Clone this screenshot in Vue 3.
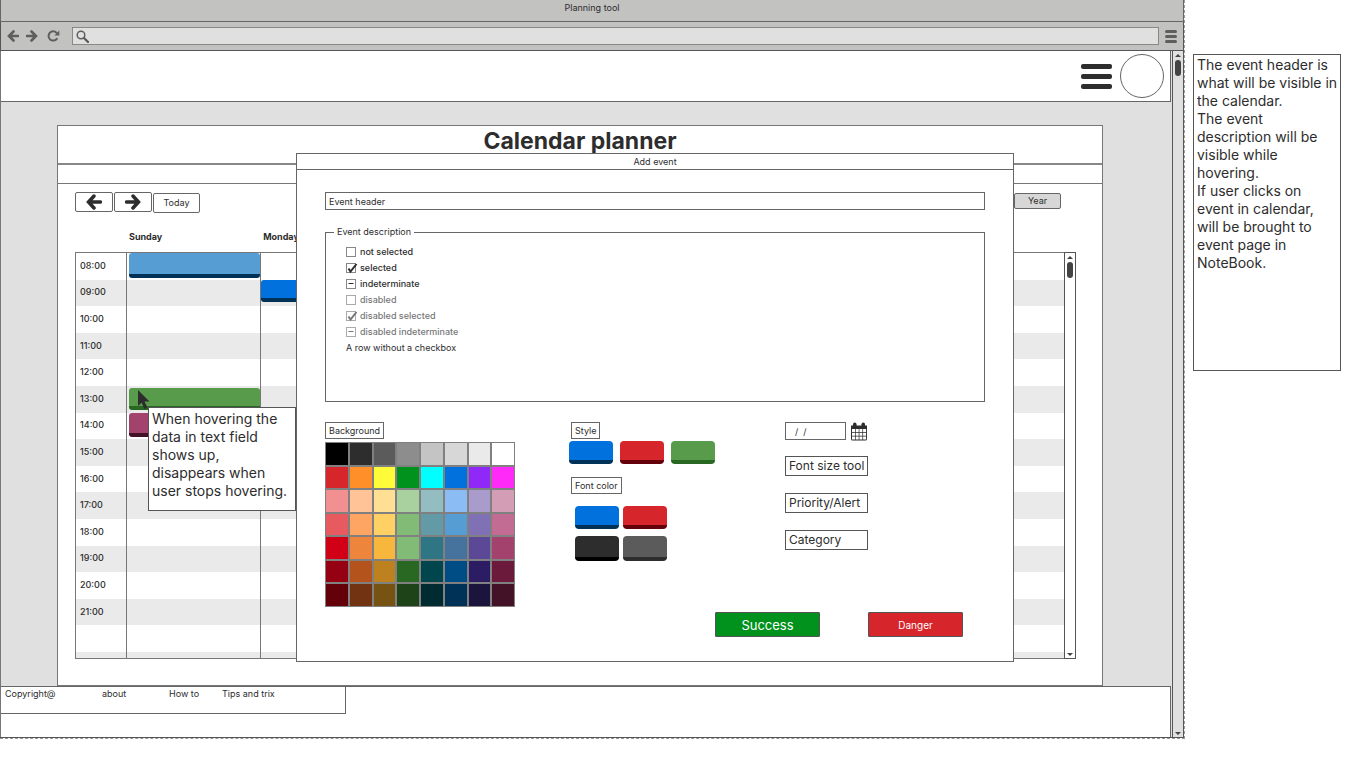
<script setup>
import { ref } from 'vue'

const times = ['08:00', '09:00', '10:00', '11:00', '12:00', '13:00', '14:00', '15:00', '16:00', '17:00', '18:00', '19:00', '20:00', '21:00', '', '']
const days = ['Sunday', 'Monday', '', '', '', '', '']
const events = {
  '0-0': 'sky',
  '1-1': 'blue',
  '5-0': 'green',
  '6-0': 'plum'
}
const rows = [
  { label: 'not selected' },
  { label: 'selected', checked: true },
  { label: 'indeterminate', mixed: true },
  { label: 'disabled', disabled: true },
  { label: 'disabled selected', checked: true, disabled: true },
  { label: 'disabled indeterminate', mixed: true, disabled: true }
]
const palette = [
  '#000000', '#2d2d2d', '#5b5b5b', '#8d8d8d', '#c4c4c4', '#d7d7d7', '#eaeaea', '#ffffff',
  '#d6252b', '#ff8f29', '#fffb38', '#00921c', '#00ffff', '#0071dd', '#9029f8', '#ff29f8',
  '#f28f90', '#ffc397', '#ffdf93', '#a9d09f', '#93bdc1', '#8bbdf4', '#a99ccd', '#d39db5',
  '#e75b60', '#ffa564', '#ffd063', '#82bb75', '#629ba5', '#569dd3', '#8070b5', '#c26c93',
  '#d20017', '#ee853c', '#f7b73c', '#82bb75', '#2e7683', '#46729e', '#5b4997', '#a3426c',
  '#960013', '#b4531b', '#bd821f', '#286823', '#00464c', '#004c85', '#2c1c64', '#6c1a3b',
  '#640009', '#713312', '#765312', '#1f4318', '#002b30', '#003156', '#1b153d', '#441227'
]
const header = ref('Event header')
const date = ref('/  /')
const address = ref('')
</script>

<template>
  <div class="page">
    <div class="frame">
      <div class="titlebar">Planning tool</div>
      <div class="navbar">
        <button class="nav" aria-label="Back">
          <svg width="12" height="12" viewBox="0 0 12 12"><path d="M6.5 1.5 2 6l4.500 4.500M2.500 6H11" /></svg>
        </button>
        <button class="nav" aria-label="Forward">
          <svg width="12" height="12" viewBox="0 0 12 12"><path d="M5.500 1.500 10 6l-4.500 4.500M9.500 6H1" /></svg>
        </button>
        <button class="nav reload" aria-label="Reload">
          <svg width="13" height="12" viewBox="0 0 13 12"><path class="thin" d="M9.800 8.800A4.600 4.600 0 1 1 9.500 2.800" /><path class="solid" d="M12.300.6v4.900H7.400z" /></svg>
        </button>
        <label class="address">
          <svg width="13" height="13" viewBox="0 0 13 13"><circle cx="5" cy="5" r="3.800" /><path d="m8 8 4 4" /></svg>
          <input v-model="address" type="text" aria-label="Address" />
        </label>
        <button class="nav menu" aria-label="Browser menu"><i></i><i></i><i></i></button>
      </div>

      <div class="viewport">
        <div class="content">
          <header class="site">
            <button class="burger" aria-label="Menu"><i></i><i></i><i></i></button>
            <div class="avatar"></div>
          </header>

          <main class="card">
            <h1>Calendar planner</h1>
            <div class="strip"></div>

            <div class="tools">
              <button class="step" aria-label="Previous">
                <svg width="16" height="16" viewBox="0 0 16 16"><path d="M8 2 2.500 8 8 14M3 8h11.500" /></svg>
              </button>
              <button class="step" aria-label="Next">
                <svg width="16" height="16" viewBox="0 0 16 16"><path d="M8 2l5.500 6L8 14M13 8H1.500" /></svg>
              </button>
              <button class="today">Today</button>
              <button class="year">Year</button>
            </div>

            <div class="calendar">
              <table>
                <thead>
                  <tr>
                    <td></td>
                    <th v-for="(d, i) in days" :key="i" scope="col">{{ d }}</th>
                  </tr>
                </thead>
                <tbody>
                  <tr v-for="(t, r) in times" :key="r">
                    <th scope="row">{{ t }}</th>
                    <td v-for="(d, c) in days" :key="c">
                      <button v-if="events[r + '-' + c]" class="event" :class="events[r + '-' + c]" aria-label="Event"></button>
                      <template v-if="r === 5 && c === 0">
                        <svg class="cursor" width="13" height="20" viewBox="0 0 13 20"><path d="M1 0v16l3.600-3.300L7.400 19l3-1.400-2.900-6H12.500z" /></svg>
                        <div class="tip">When hovering the<br />data in text field<br />shows up,<br />disappears when<br />user stops hovering.</div>
                      </template>
                    </td>
                  </tr>
                </tbody>
              </table>
              <div class="scroll inner"><b class="up"></b><span></span><b class="down"></b></div>
            </div>

            <section class="dialog" role="dialog" aria-labelledby="dialog-title">
              <h2 id="dialog-title">Add event</h2>
              <div class="body">
                <input v-model="header" class="field" type="text" aria-label="Event header" />
                <fieldset>
                  <legend>Event description</legend>
                  <label v-for="row in rows" :key="row.label" class="check" :class="{ off: row.disabled }">
                    <span class="box">
                      <input type="checkbox" :checked="row.checked" :indeterminate="row.mixed" :disabled="row.disabled" />
                      <svg v-if="row.checked" width="12" height="11" viewBox="0 0 12 11"><path d="M2.500 5.500 4.500 8.500 10.500 1" /></svg>
                      <svg v-if="row.mixed" width="12" height="11" viewBox="0 0 12 11"><path class="dash" d="M2.500 4.500H7.500" /></svg>
                    </span>
                    {{ row.label }}
                  </label>
                  <p>A row without a checkbox</p>
                </fieldset>

                <div class="options">
                  <div>
                    <span class="tag">Background</span>
                    <div class="palette">
                      <button v-for="(c, i) in palette" :key="i" :style="{ background: c }" :aria-label="c"></button>
                    </div>
                  </div>
                  <div class="styles">
                    <span class="tag">Style</span>
                    <div class="keys first">
                      <button class="key blue" aria-label="Blue"></button>
                      <button class="key red" aria-label="Red"></button>
                      <button class="key green" aria-label="Green"></button>
                    </div>
                    <span class="tag">Font color</span>
                    <div class="keys second">
                      <button class="key blue" aria-label="Blue text"></button>
                      <button class="key red" aria-label="Red text"></button>
                    </div>
                    <div class="keys third">
                      <button class="key black" aria-label="Black text"></button>
                      <button class="key gray" aria-label="Gray text"></button>
                    </div>
                  </div>
                  <div class="extras">
                    <div class="date">
                      <input v-model="date" type="text" aria-label="Date" />
                      <button aria-label="Pick a date">
                        <svg width="18" height="19" viewBox="0 0 18 19" stroke="none">
                          <path class="ink" d="M1 3.500h16V17a1.500 1.500 0 0 1-1.500 1.500h-13A1.500 1.500 0 0 1 1 17z" />
                          <path class="cells" d="M2 7h3v3H2zM5.700 7h3v3h-3zM9.400 7h3v3h-3zM13.100 7h3v3h-3zM2 10.700h3v3H2zM5.700 10.700h3v3h-3zM9.400 10.700h3v3h-3zM13.100 10.700h3v3h-3zM2 14.400h3v3H2zM5.700 14.400h3v3h-3zM9.400 14.400h3v3h-3zM13.100 14.400h3v3h-3z" />
                          <rect class="ring" x="3" y=".5" width="3.500" height="5" rx="1.700" />
                          <rect class="ring" x="11.500" y=".5" width="3.500" height="5" rx="1.700" />
                        </svg>
                      </button>
                    </div>
                    <button class="pick">Font size tool</button>
                    <button class="pick">Priority/Alert</button>
                    <button class="pick">Category</button>
                  </div>
                </div>

                <div class="actions">
                  <button class="success">Success</button>
                  <button class="danger">Danger</button>
                </div>
              </div>
            </section>
          </main>

          <footer>
            <nav>
              <span>Copyright@</span>
              <a href="#about">about</a>
              <a href="#how">How to</a>
              <a href="#tips">Tips and trix</a>
            </nav>
          </footer>
        </div>
        <div class="scroll outer"><b class="up"></b><span></span><b class="down"></b></div>
      </div>
    </div>

    <aside>The event header is<br />what will be visible in<br />the calendar.<br />The event<br />description will be<br />visible while<br />hovering.<br />If user clicks on<br />event in calendar,<br />will be brought to<br />event page in<br />NoteBook.</aside>
  </div>
</template>

<style>
body {
  background: #fff;
}
</style>

<style scoped>
.page,
.page * {
  box-sizing: border-box;
}
.page {
  display: flex;
  align-items: flex-start;
  gap: 8px;
  padding-right: 21px;
  font: 9px/12px Inter, "Liberation Sans", sans-serif;
  color: #2d2d2d;
}
button,
input {
  margin: 0;
  padding: 0;
  border: 0;
  background: none;
  font: inherit;
  color: inherit;
}
svg {
  display: block;
  fill: none;
  stroke: #2d2d2d;
}
.frame {
  flex: 1;
  min-width: 0;
  border-right: 1px dashed #999;
  border-bottom: 1px dashed #999;
}
.titlebar {
  height: 22px;
  padding-top: 2px;
  background: #c2c2c0;
  border: 1px solid #666;
  border-top: 0;
  text-align: center;
}
.navbar {
  display: flex;
  align-items: center;
  height: 29px;
  padding: 0 6px;
  background: #c2c2c0;
  border: 1px solid #555;
  border-top: 0;
}
.nav {
  margin-right: 7px;
}
.nav svg {
  stroke: #5e5e5e;
  stroke-width: 2.600;
  stroke-linecap: round;
}
.nav.reload {
  margin: 0 12px 0 2px;
}
.nav svg .thin {
  stroke-width: 2;
}
.nav svg .solid {
  fill: #5e5e5e;
  stroke: none;
}
.address {
  display: flex;
  flex: 1;
  align-items: center;
  height: 18px;
  padding-left: 3px;
  background: #e0e0e0;
  border: 1px solid #888;
}
.address svg {
  stroke: #5e5e5e;
  stroke-width: 1.500;
}
.address path {
  stroke-width: 2.400;
  stroke-linecap: round;
}
.address input {
  flex: 1;
  outline: 0;
}
.nav.menu {
  display: grid;
  gap: 2px;
  width: 12px;
  margin: 0 0 0 6px;
}
.nav.menu i {
  height: 3px;
  border-radius: 2px;
  background: #5e5e5e;
}
.viewport {
  display: flex;
  gap: 1px;
  background: #e0e0e0;
  border: 1px solid #555;
  border-width: 0 1px 1px 0;
}
.content {
  flex: 1;
  min-width: 0;
  border-left: 1px solid #777;
}
.site {
  display: flex;
  justify-content: flex-end;
  align-items: center;
  gap: 8px;
  height: 51px;
  padding-right: 6px;
  background: #fff;
  border: 1px solid #666;
  border-width: 0 1px 1px 0;
}
.burger {
  display: grid;
  gap: 5px;
  width: 31px;
}
.burger i {
  height: 5px;
  border-radius: 2px;
  background: #2d2d2d;
}
.avatar {
  width: 44px;
  height: 44px;
  border: 1px solid #666;
  border-radius: 50%;
}
.card {
  position: relative;
  margin: 23px 68px 0 56px;
  padding-bottom: 26px;
  background: #fff;
  border: 1px solid #777;
}
h1 {
  height: 39px;
  margin: 0;
  border-bottom: 2px solid #888;
  font-size: 23px;
  line-height: 30px;
  text-align: center;
}
.strip {
  height: 19px;
  border-bottom: 1px solid #777;
}
.tools {
  display: flex;
  gap: 1px;
  padding: 8px 41px 0 17px;
}
.tools button {
  height: 20px;
  border: 1px solid #666;
  border-radius: 2px;
}
.step {
  display: grid;
  place-items: center;
  width: 38px;
}
.step svg {
  stroke-width: 3.500;
  stroke-linecap: round;
}
.tools .today,
.tools .year {
  width: 47px;
  margin-top: 1px;
}
.tools .year {
  height: 16px;
  margin-left: auto;
  background: #d7d7d7;
}
.calendar {
  display: flex;
  align-items: flex-end;
  margin: 11px 26px 0 17px;
}
table {
  display: block;
  flex: 1;
  min-width: 0;
}
thead {
  display: block;
}
tr {
  display: grid;
  grid-template-columns: 50px repeat(7, 1fr);
}
thead tr {
  height: 28px;
}
thead td,
thead th {
  padding: 7px 0 0 4px;
  text-align: left;
}
tbody {
  display: grid;
  grid-template-rows: repeat(15, 1fr) 6px;
  height: 407px;
  border: 1px solid #777;
  border-right: 0;
}
tbody tr:nth-child(even) {
  background: #eaeaea;
}
tbody th {
  display: flex;
  align-items: center;
  padding: 0 0 1px 4px;
  font-weight: 500;
}
tbody td {
  position: relative;
  padding: 0;
  border-left: 1px solid #777;
}
.event {
  position: absolute;
  inset: 0 0 2px 2px;
  border-bottom: 4px solid;
  border-radius: 3px;
}
.sky {
  background: #569dd3;
  border-color: #003156;
}
.plum {
  background: #a3426c;
  border-color: #441227;
}
.event.blue {
  inset: 0 0 4px;
}
.event.green {
  inset: 2px 0 3px 2px;
}
.cursor {
  position: absolute;
  top: 4px;
  left: 10px;
  fill: #2d2d2d;
  stroke: none;
}
.tip {
  position: absolute;
  z-index: 1;
  top: 21px;
  left: 21px;
  width: 148px;
  height: 104px;
  padding: 2px 3px;
  background: #fff;
  border: 1px solid #555;
  font-size: 14px;
  line-height: 18px;
  white-space: nowrap;
}
.scroll {
  display: flex;
  flex-direction: column;
  align-items: center;
  gap: 3px;
  width: 12px;
  padding: 3px 0 2px;
  border: 1px solid #555;
}
.scroll.inner {
  height: 407px;
}
.scroll.outer {
  width: 11px;
  border-width: 0 0 0 1px;
}
.scroll b {
  border: 3px solid transparent;
}
.scroll .up {
  border-top: 0;
  border-bottom-color: #444;
}
.scroll .down {
  margin-top: auto;
  border-bottom: 0;
  border-top-color: #444;
}
.scroll span {
  width: 6px;
  height: 16px;
  border-radius: 3px;
  background: #444;
}
.dialog {
  position: absolute;
  z-index: 2;
  top: 27px;
  left: 238px;
  right: 88px;
  background: #fff;
  border: 1px solid #666;
}
h2 {
  height: 16px;
  margin: 0;
  padding-top: 2px;
  border-bottom: 1px solid #666;
  font-size: 9px;
  font-weight: 400;
  line-height: 12px;
  text-align: center;
}
.body {
  padding: 22px 28px 24px;
}
.field {
  display: block;
  width: 100%;
  height: 18px;
  padding: 0 3px;
  border: 1px solid #666;
}
fieldset {
  height: 176px;
  margin: 16px 0 0;
  padding: 6px 20px 0;
  border: 1px solid #666;
}
legend {
  margin-left: -12px;
  padding: 0 3px;
}
.check {
  display: flex;
  align-items: center;
  gap: 4px;
  height: 16px;
  font-weight: 500;
}
.box {
  position: relative;
}
.box input {
  display: block;
  appearance: none;
  width: 10px;
  height: 10px;
  border: 1px solid #888;
}
.box svg {
  position: absolute;
  top: 0;
  left: 0;
  stroke-width: 2;
}
.box .dash {
  stroke-width: 1;
}
.off {
  color: #777;
}
.off input {
  border-color: #aaa;
}
.off svg {
  stroke: #777;
}
fieldset p {
  margin: 2px 0 0;
}
.options {
  display: grid;
  grid-template-columns: 244fr 216fr 200fr;
  margin-top: 20px;
}
.tag {
  display: block;
  width: fit-content;
  height: 17px;
  padding: 2px 3px;
  border: 1px solid #666;
}
.palette {
  display: grid;
  grid-template: repeat(7, 1fr) / repeat(8, 1fr);
  width: 190px;
  height: 165px;
  margin-top: 3px;
}
.palette button {
  border: 1px solid #808080;
}
.styles .tag {
  margin-left: 2px;
}
.keys {
  display: flex;
}
.key {
  width: 44px;
  height: 23px;
  border-bottom: 4px solid;
  border-radius: 4px;
}
.blue {
  background: #0071dd;
  border-color: #003156;
}
.green {
  background: #589b4a;
  border-color: #286823;
}
.red {
  background: #d6252b;
  border-color: #640009;
}
.black {
  background: #2d2d2d;
  border-color: #000;
}
.gray {
  background: #5b5b5b;
  border-color: #2d2d2d;
}
.first {
  gap: 7px;
  margin: 2px 0 13px;
}
.second,
.third {
  gap: 4px;
  margin: 12px 0 0 6px;
}
.third {
  margin-top: 7px;
}
.third .key {
  height: 25px;
}
.date {
  display: flex;
  gap: 4px;
  margin-bottom: 15px;
}
.date input {
  width: 61px;
  height: 18px;
  padding-left: 9px;
  border: 1px solid #666;
}
.ink,
.ring {
  fill: #2d2d2d;
  stroke: none;
}
.cells {
  fill: #fff;
  stroke: none;
}
.pick {
  display: block;
  width: 83px;
  height: 20px;
  margin-bottom: 17px;
  padding-left: 3px;
  border: 1px solid #555;
  font-size: 12px;
  text-align: left;
  white-space: nowrap;
}
.actions {
  display: flex;
  justify-content: flex-end;
  gap: 48px;
  margin-top: 5px;
  padding-right: 22px;
}
.actions button {
  width: 95px;
  height: 25px;
  border: 1px solid #555;
  border-radius: 1px;
  color: #fff;
}
.actions .success {
  width: 105px;
  background: #00921c;
  font-size: 13px;
}
.actions .danger {
  background: #d6252b;
  font-size: 10px;
}
footer {
  height: 51px;
  background: #fff;
  border: 1px solid #666;
  border-width: 1px 1px 0 0;
}
nav {
  display: grid;
  grid-template-columns: 97px 67px 53px 1fr;
  width: 345px;
  height: 27px;
  padding: 1px 4px;
  border: 1px solid #666;
  border-width: 0 1px 1px 0;
}
a {
  color: inherit;
  text-decoration: none;
}
aside {
  width: 148px;
  height: 317px;
  margin-top: 54px;
  padding: 1px 3px;
  border: 1px solid #555;
  font-size: 14px;
  line-height: 18px;
  white-space: nowrap;
}
</style>
